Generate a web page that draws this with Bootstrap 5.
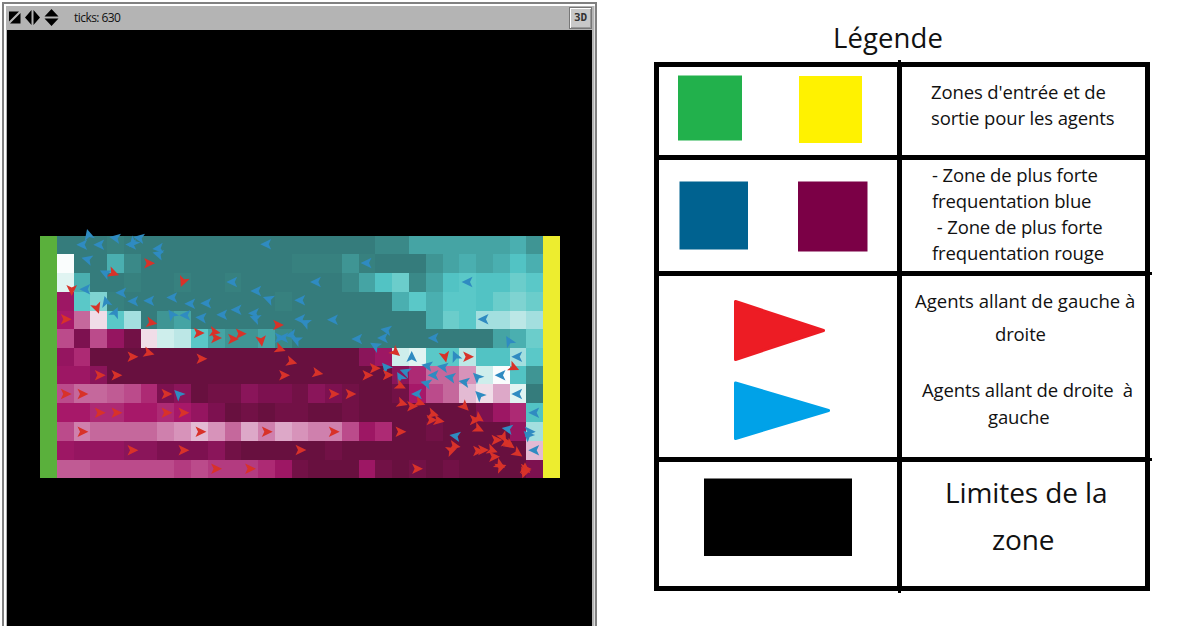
<!DOCTYPE html>
<html lang="fr">
<head>
<meta charset="utf-8">
<title>Simulation</title>
<link href="https://cdn.jsdelivr.net/npm/bootstrap@5.3.0/dist/css/bootstrap.min.css" rel="stylesheet">
<style>
body{width:1195px;height:627px;overflow:hidden;background:#fff;color:#111;font-family:"Open Sans","Noto Sans",sans-serif}
.world{width:595px;height:624px;margin:2px 0 0 2px;border:solid #808080;border-width:2px 2px 0 2px;background:#b4b4b4;box-shadow:inset 2px 2px 0 #fff,inset -1px 0 0 #ddd}
.toolbar{height:26px;padding:0 3px 0 5px}
.ticks{font-size:12px;line-height:16px;letter-spacing:-.55px;margin-left:13px;padding-top:6px}
.btn3d{width:23px;height:22px;margin-top:3px;padding:0;border:1px solid #777;border-radius:0;background:#c8c8c8;box-shadow:inset 1px 1px 0 #fff,inset -1px -1px 0 #999;font:bold 11px/20px "DejaVu Sans Mono",monospace;color:#333}
.view{width:585px;height:596px;margin-left:3px;background:#000}
.legend-title{font-size:27.5px;line-height:36px;padding-top:20px;margin-left:179px;letter-spacing:.1px}
.legend-side{margin-left:57px}
.legend-grid{position:relative;display:grid;grid-template-columns:238px 243px;grid-template-rows:88px 111px 181px 124px;gap:5px;padding:5px;width:496px;background:#000;margin-top:6px}
.legend-grid::before{content:"";position:absolute;left:244px;top:-2px;bottom:-2px;width:3px;background:#000}
.legend-grid>div{background:#fff;white-space:pre}
.t{font-size:18.5px;line-height:26.1px;letter-spacing:-.13px}
.t p,.big p{margin:0}
.big{font-size:28px;line-height:46.5px;letter-spacing:-.1px}
.over{position:relative}
.over::after{content:"";position:absolute;right:-7px;top:-4px;width:7px;height:3px;background:#000}
</style>
<script src="https://cdn.jsdelivr.net/npm/bootstrap@5.3.0/dist/js/bootstrap.bundle.min.js"></script>
</head>
<body class="d-flex align-items-start">
<section class="world flex-shrink-0">
  <div class="toolbar d-flex align-items-start">
    <svg width="52" height="22" viewBox="9 4 52 22" fill="#000"><path d="M9 11h10L9 21zM20.500 12.500V23H10z" transform="translate(0 .5)"/><path d="M31.500 10v15L25 17.500zM33.500 10v15L40 17.500zM51.500 9l7 7.500h-14zM51.500 26l7-7.500h-14z"/></svg>
    <span class="ticks">ticks: 630</span>
    <button class="btn3d ms-auto">3D</button>
  </div>
  <svg class="view d-block" viewBox="7 30 585 596"><g id="patches" shape-rendering="crispEdges"></g><g id="agents"></g></svg>
</section>
<section class="legend-side">
  <h1 class="legend-title mb-0 fw-normal">Légende</h1>
  <div class="legend-grid">
    <div><svg class="d-block" width="238" height="88" viewBox="659 67 238 88"><path fill="#22b14c" d="M678 75.500h64v65h-64z"/><path fill="#fff200" d="M799 76h63v67h-63z"/></svg></div>
    <div class="t" style="padding:12px 0 0 29px"><p>Zones d'entrée et de</p><p>sortie pour les agents</p></div>
    <div><svg class="d-block" width="238" height="111" viewBox="659 160 238 111"><path fill="#006290" d="M679.500 181.500h68.500v68h-68.500z"/><path fill="#7b0046" d="M798 181.500h69.500v70h-69.500z"/></svg></div>
    <div class="t" style="padding:2px 0 0 30px"><p>- Zone de plus forte</p><p>frequentation blue</p><p> - Zone de plus forte</p><p>frequentation rouge</p></div>
    <div><svg class="d-block" width="238" height="181" viewBox="659 276 238 181" stroke-width="3" stroke-linejoin="round"><path fill="#ed1c24" stroke="#ed1c24" d="M735.500 301.500v58l88-29z"/><path fill="#00a2e8" stroke="#00a2e8" d="M735.500 383v55.500l93-28z"/></svg></div>
    <div class="t over" style="padding-top:8px"><p style="line-height:33px;padding-left:13px;letter-spacing:0">Agents allant de gauche à</p><p style="line-height:33px;padding-left:93px">droite</p><p style="line-height:27px;padding-left:20px;margin-top:26px">Agents allant de droite  à</p><p style="line-height:27px;padding-left:86px">gauche</p></div>
    <div><svg class="d-block" width="238" height="124" viewBox="659 462 238 124"><path d="M704 478.500h148v77.500h-148z"/></svg></div>
    <div class="big over" style="padding-top:7px"><p style="padding-left:43px">Limites de la</p><p style="padding-left:90px">zone</p></div>
  </div>
</section>
<script>
const C={a:'#357c7c',b:'#37817f',c:'#3a8988',d:'#3f9594',e:'#45a4a4',f:'#4aafb0',g:'#52c3c4',h:'#5ac8c8',i:'#6bcdcb',j:'#7fd3d1',k:'#a3dfdf',l:'#bce7e6',m:'#ceeeec',n:'#e0f4f2',o:'#fafdfd',
A:'#68103f',B:'#721146',C:'#7d1150',D:'#8a155a',E:'#951560',F:'#9d1764',G:'#a71869',H:'#ad2a74',I:'#b33b80',J:'#bb4b8b',K:'#c05b94',L:'#c5689c',M:'#cf80ad',N:'#d793ba',O:'#dda8c8',P:'#e3bad3',Q:'#f0dde8'};
const rows=['aaabaaaaaaaaaaaaaaacceeeeeefd','oaafcaaaaaaaaabbbdbaaadefefgf','nfaabaabaabaaaaaacegiceghggih','Fhjbaaaaaaaaabaaaaaafhfhhgiji','GLQhkadeaaaaaaaaaaaaaafihkklk','JCJEBQmlheddecaaaaaaaaaaaaefi','EHAAAAAAAAAAAAAAAADFmnhhlggkh','FFDAAAAAAAAAAAAAAAAADHLLNmogd','JLLKJHCDABBDCCBDCBAABGJLPQOna','GGHHGGHGECABABBAABAAAAAAACFHg','JMLLLLMNPNLOMONMMJFHAABAAAAEk','FEEEDDCCCDBAAAAABAAAAAAAAAAAP','KKJJJJJIJIIIHFBAAAFBABABAAAAC'];
const ys=[236,254,273,292,311,329,348,366,384,403,422,441,460,478],cx=n=>Math.round(40+n*16.774);
let s='<path fill="#5ab03c" d="M40 236h17v242H40z"/><path fill="#eded2f" d="M543 236h17v242h-17z"/>';
rows.forEach((r,j)=>[...r].forEach((k,i)=>{s+=`<rect x="${cx(i+1)}" y="${ys[j]}" width="${cx(i+2)-cx(i+1)}" height="${ys[j+1]-ys[j]}" fill="${C[k]}"/>`}));
patches.innerHTML=s;
// Each agent: x, y, heading in degrees clockwise from east
const blue=[[88.5,234.5,-105],[82,244.7],[99,244.7],[115,238,190],[131,244.5],[133,243,130],[139,238,190],[158,248.5,175],[158,254,195],[87,259.3,195],[105,273,205],[85,289.3],[121,292.7],[106,301.5,-105],[133,301.3],[149,300.7],[172,297.5],[190,303.7],[206,303.3],[115.3,312.3,-65],[171.7,314.3,235],[185,315.3],[201,317.7,185],[266,244.3],[366.3,263],[232,282],[315.7,282],[256,291],[268.3,299,200],[300,300.3],[236.3,309.7],[222,314.7],[253.7,313.3],[255,318.3,200],[300,319.3],[305,322.7,205],[332.7,319.7],[357,339],[375,345.7,210],[280,337.7,0],[283,337.7],[291,335,170],[296,340,205],[382.7,338],[386,330,190],[467.3,282],[483.3,319.3],[433.3,338],[509,341,240],[178.3,394,225],[411.7,356.7,-90],[455.3,356,-115],[517,356.7],[385.7,367,230],[427,365.7,190],[442.7,367,190],[405,371.7,200],[400,377,240],[433.3,375.3],[450,377.3,190],[477,376.7,225],[500.3,375.3],[464,382,190],[426,383.3,195],[416.7,394],[479.3,395,225],[517,394],[534,412.7],[507.3,429,190],[530,431.7,0],[527.7,435,225],[455,436,190],[534,450.3]];
const red=[[149.3,263.3],[113.7,273.3,20],[183,281.7,112],[71.7,290.3,90],[97,308.3,70],[66,319.3],[151.7,322.7,10],[199,333],[215,332,10],[216.3,338],[233.3,339],[241,333.7],[261.3,341,83],[278.300,325],[280.3,349,20],[132.7,356.7],[149,353,15],[201.7,358.7],[100,375.3],[116.7,375.3],[66,394],[82.7,394],[166.7,394],[100,412.7],[116.7,412.7],[166.7,412.7],[183.7,412.7],[82.7,431.7],[200.7,431.7],[132.7,450.3],[183.7,450.3],[291.7,362,15],[284.3,375.3],[317.7,373,10],[334,394],[350.7,394],[367.7,375.3],[375,368.3],[267,431.7],[334,431.7],[300.7,450],[216.3,468.7],[250.3,468.7],[395.7,352.3,40],[445,357,78],[468.3,356.7],[514,367.7,25],[388,375],[400.7,386,25],[402.3,403.3,18],[412.3,406.3],[420,402.7,20],[464.7,406.7,45],[433.3,414,15],[431.7,420],[439,420.7,10],[475,420],[479,418.3,35],[478.7,429,25],[400.7,431.7],[496.7,440],[503.3,437.3,60],[506.7,442.3,10],[510,445,35],[517.7,453.3,35],[478.3,451],[483.3,450],[492.3,450.3,20],[494.3,456.7],[455,446,10],[451.7,450.3,-20],[500,465,30],[501,467,-20],[525,468,-90],[526,469,0],[524.3,473,110],[417.3,468.7]];
const draw=(l,c,d)=>l.map(([x,y,a=d])=>`<path fill="${c}" transform="translate(${x} ${y}) rotate(${a})" d="M5.700 0L-5.200 5.300-2.700 0-5.200-5.300z"/>`).join('');
agents.innerHTML=draw(blue,'#2f8bc1',180)+draw(red,'#d83229',0);
</script>
</body>
</html>
